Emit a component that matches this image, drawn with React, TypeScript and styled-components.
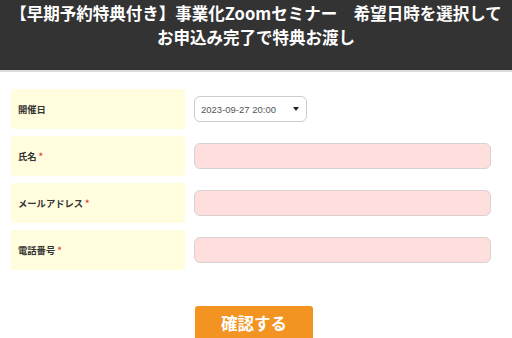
import React from "react";
import styled, { createGlobalStyle } from "styled-components";

const Global = createGlobalStyle`
  html, body { margin: 0; padding: 0; background: #fff; }
  body { font-family: "Noto Sans CJK JP", "Noto Sans", sans-serif; color: #333; }
`;

const Header = styled.header`
  background: #333333;
  border-bottom: 2px solid #dcdcdc;
  height: 69px;
  box-sizing: content-box;
  padding-top: 1px;
  text-align: center;
  color: #fff;
  font-weight: 700;
  font-size: 16.5px;
  line-height: 24px;
  letter-spacing: 0;
`;

const Form = styled.form`
  padding: 17px 11px 0 11px;
`;

const Table = styled.div`
  display: grid;
  grid-template-columns: 174px 1fr;
  column-gap: 9px;
  row-gap: 7px;
`;

const Label = styled.div`
  background: #fffddd;
  border-radius: 3px;
  height: 40px;
  display: flex;
  align-items: center;
  padding-left: 7px;
  font-size: 9.3px;
  font-weight: 700;
  color: #333;
`;

const Req = styled.span`
  color: #e8443a;
  margin-left: 2px;
  font-size: 9px;
`;

const Field = styled.div`
  display: flex;
  align-items: center;
`;

const Select = styled.div`
  box-sizing: border-box;
  width: 113px;
  height: 26px;
  border: 1px solid #cccccc;
  border-radius: 6px;
  background: #fff;
  display: flex;
  align-items: center;
  justify-content: space-between;
  padding: 0 7px 0 6px;
  font-family: "Liberation Sans", Arial, sans-serif;
  font-size: 9.5px;
  color: #555;
`;

const Arrow = styled.span`
  width: 0;
  height: 0;
  border-left: 3px solid transparent;
  border-right: 3px solid transparent;
  border-top: 4px solid #222;
`;

const Input = styled.input`
  box-sizing: border-box;
  width: 297px;
  height: 26px;
  border: 1px solid #d9d0d0;
  border-radius: 6px;
  background: #ffdede;
  outline: none;
  margin: 0;
`;

const ButtonRow = styled.div`
  display: flex;
  justify-content: flex-start;
  padding-left: 184px;
  margin-top: 36px;
`;

const Button = styled.button`
  width: 118px;
  height: 38px;
  border: none;
  border-radius: 3px;
  background: #f39422;
  color: #fff;
  font-family: "Noto Sans CJK JP", sans-serif;
  font-weight: 700;
  font-size: 16.5px;
  display: flex;
  justify-content: center;
  align-items: flex-start;
  padding-top: 5px;
`;

export default function App() {
  return (
    <>
      <Global />
      <Header>
        【早期予約特典付き】事業化Zoomセミナー　希望日時を選択して
        <br />
        お申込み完了で特典お渡し
      </Header>
      <Form onSubmit={(e) => e.preventDefault()}>
        <Table>
          <Label>開催日</Label>
          <Field>
            <Select>
              <span>2023-09-27 20:00</span>
              <Arrow />
            </Select>
          </Field>
          <Label>
            氏名<Req>*</Req>
          </Label>
          <Field>
            <Input />
          </Field>
          <Label>
            メールアドレス<Req>*</Req>
          </Label>
          <Field>
            <Input />
          </Field>
          <Label>
            電話番号<Req>*</Req>
          </Label>
          <Field>
            <Input />
          </Field>
        </Table>
        <ButtonRow>
          <Button type="submit">確認する</Button>
        </ButtonRow>
      </Form>
    </>
  );
}
